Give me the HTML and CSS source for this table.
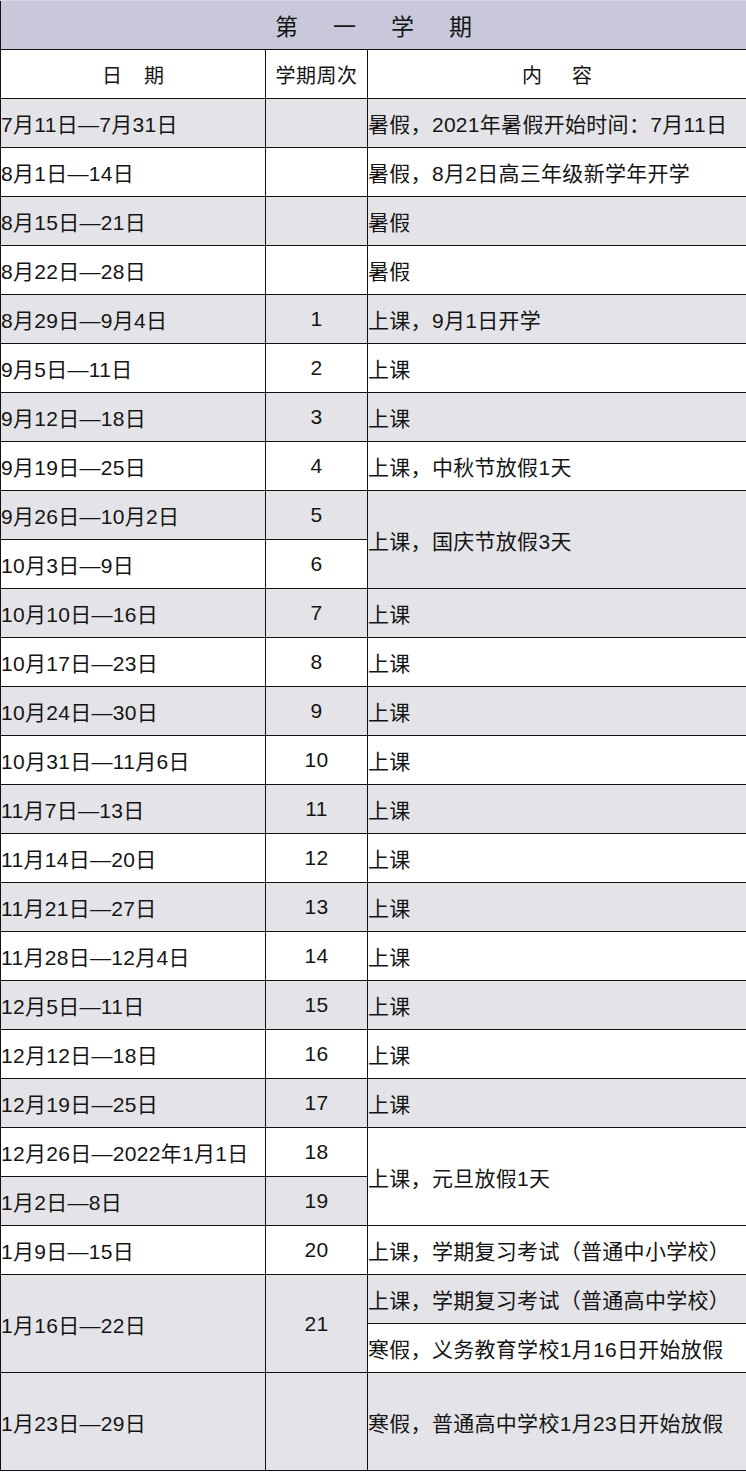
FILE: index.html
```html
<!DOCTYPE html>
<html lang="zh-CN">
<head>
<meta charset="utf-8">
<title>第一学期</title>
<link rel="stylesheet" href="styles.css">
</head>
<body>
<table class="cal">
  <colgroup>
    <col class="c-date">
    <col class="c-week">
    <col class="c-text">
  </colgroup>
  <thead>
    <tr class="title-row"><th colspan="3" class="title"><span>第一学期</span></th></tr>
    <tr class="head-row">
      <th class="hd hd-date"><span>日期</span></th>
      <th class="hd hd-week">学期周次</th>
      <th class="hd hd-text"><span>内容</span></th>
    </tr>
  </thead>
  <tbody>
    <tr class="g"><td class="d">7月11日—7月31日</td><td class="w"></td><td class="t">暑假，2021年暑假开始时间：7月11日</td></tr>
    <tr><td class="d">8月1日—14日</td><td class="w"></td><td class="t">暑假，8月2日高三年级新学年开学</td></tr>
    <tr class="g"><td class="d">8月15日—21日</td><td class="w"></td><td class="t">暑假</td></tr>
    <tr><td class="d">8月22日—28日</td><td class="w"></td><td class="t">暑假</td></tr>
    <tr class="g"><td class="d">8月29日—9月4日</td><td class="w">1</td><td class="t">上课，9月1日开学</td></tr>
    <tr><td class="d">9月5日—11日</td><td class="w">2</td><td class="t">上课</td></tr>
    <tr class="g"><td class="d">9月12日—18日</td><td class="w">3</td><td class="t">上课</td></tr>
    <tr><td class="d">9月19日—25日</td><td class="w">4</td><td class="t">上课，中秋节放假1天</td></tr>
    <tr class="g"><td class="d">9月26日—10月2日</td><td class="w">5</td><td class="t" rowspan="2">上课，国庆节放假3天</td></tr>
    <tr><td class="d">10月3日—9日</td><td class="w">6</td></tr>
    <tr class="g"><td class="d">10月10日—16日</td><td class="w">7</td><td class="t">上课</td></tr>
    <tr><td class="d">10月17日—23日</td><td class="w">8</td><td class="t">上课</td></tr>
    <tr class="g"><td class="d">10月24日—30日</td><td class="w">9</td><td class="t">上课</td></tr>
    <tr><td class="d">10月31日—11月6日</td><td class="w">10</td><td class="t">上课</td></tr>
    <tr class="g"><td class="d">11月7日—13日</td><td class="w">11</td><td class="t">上课</td></tr>
    <tr><td class="d">11月14日—20日</td><td class="w">12</td><td class="t">上课</td></tr>
    <tr class="g"><td class="d">11月21日—27日</td><td class="w">13</td><td class="t">上课</td></tr>
    <tr><td class="d">11月28日—12月4日</td><td class="w">14</td><td class="t">上课</td></tr>
    <tr class="g"><td class="d">12月5日—11日</td><td class="w">15</td><td class="t">上课</td></tr>
    <tr><td class="d">12月12日—18日</td><td class="w">16</td><td class="t">上课</td></tr>
    <tr class="g"><td class="d">12月19日—25日</td><td class="w">17</td><td class="t">上课</td></tr>
    <tr><td class="d">12月26日—2022年1月1日</td><td class="w">18</td><td class="t white" rowspan="2">上课，元旦放假1天</td></tr>
    <tr class="g"><td class="d">1月2日—8日</td><td class="w">19</td></tr>
    <tr><td class="d">1月9日—15日</td><td class="w">20</td><td class="t">上课，学期复习考试（普通中小学校）</td></tr>
    <tr class="g"><td class="d" rowspan="2">1月16日—22日</td><td class="w" rowspan="2">21</td><td class="t">上课，学期复习考试（普通高中学校）</td></tr>
    <tr><td class="t">寒假，义务教育学校1月16日开始放假</td></tr>
    <tr class="g tall"><td class="d">1月23日—29日</td><td class="w"></td><td class="t">寒假，普通高中学校1月23日开始放假</td></tr>
  </tbody>
</table>
</body>
</html>
```

FILE: styles.css
```css
html, body {
  margin: 0;
  padding: 0;
  background: #ffffff;
}

.cal {
  width: 746px;
  border-collapse: collapse;
  table-layout: fixed;
  font-family: "Liberation Sans", "Noto Sans CJK SC", sans-serif;
  font-size: 21px;
  letter-spacing: 0.3px;
  color: #141414;
}

.c-date { width: 265px; }
.c-week { width: 102px; }
.c-text { width: 379px; }

.cal th,
.cal td {
  border: 1px solid #111111;
  padding: 0;
  height: 48px;
  vertical-align: middle;
  white-space: nowrap;
  overflow: hidden;
}

.cal tr { height: 49px; }

.title-row th {
  background: #c9c8da;
  border-top-color: #d9d8e6;
}

.title {
  font-family: "Noto Sans CJK SC", sans-serif;
  font-weight: 400;
  font-size: 23px;
  text-align: center;
}

.title span {
  letter-spacing: 35px;
  margin-right: -35px;
}

.hd {
  font-family: "Noto Sans CJK SC", sans-serif;
  font-weight: 400;
  font-size: 20px;
  letter-spacing: 0.5px;
  text-align: center;
  background: #ffffff;
}

.hd-date span {
  letter-spacing: 22px;
  margin-right: -22px;
}

.hd-text span {
  letter-spacing: 30px;
  margin-right: -30px;
}

.g td { background: #e4e4e8; }

.cal td.white { background: #ffffff; }

.d {
  text-align: left;
  padding-left: 5px;
}

.w { text-align: center; }

.t {
  text-align: left;
  padding-left: 4px;
}

.tall { height: 98px; }
.cal .tall td { height: 97px; }
```
